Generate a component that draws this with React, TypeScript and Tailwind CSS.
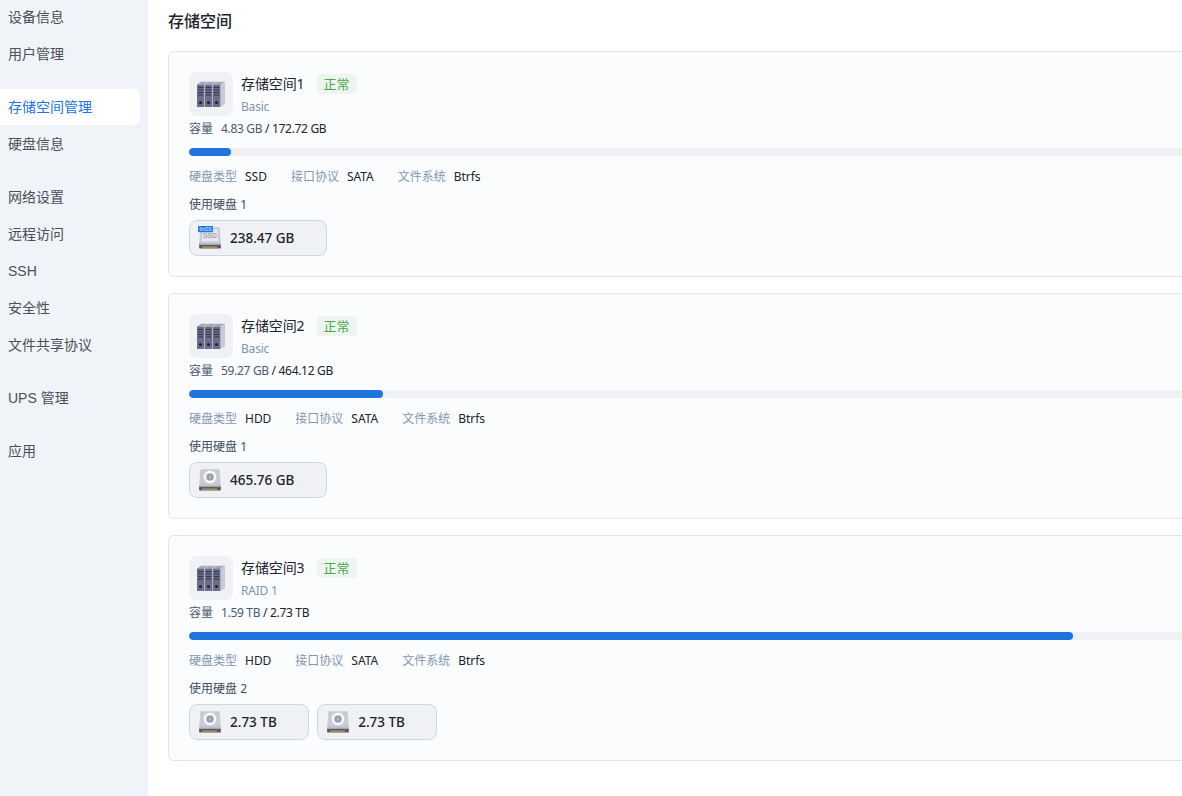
import React from "react";

const NAV_GROUPS = [
  ["设备信息", "用户管理"],
  ["存储空间管理", "硬盘信息"],
  ["网络设置", "远程访问", "SSH", "安全性", "文件共享协议"],
  ["UPS 管理"],
  ["应用"],
];

const ACTIVE = "存储空间管理";

type Volume = {
  name: string;
  mode: string;
  used: string;
  total: string;
  percent: number;
  diskType: string;
  disks: string[];
};

const VOLUMES: Volume[] = [
  {
    name: "存储空间1",
    mode: "Basic",
    used: "4.83 GB",
    total: "172.72 GB",
    percent: 2.77,
    diskType: "SSD",
    disks: ["238.47 GB"],
  },
  {
    name: "存储空间2",
    mode: "Basic",
    used: "59.27 GB",
    total: "464.12 GB",
    percent: 12.77,
    diskType: "HDD",
    disks: ["465.76 GB"],
  },
  {
    name: "存储空间3",
    mode: "RAID 1",
    used: "1.59 TB",
    total: "2.73 TB",
    percent: 58.2,
    diskType: "HDD",
    disks: ["2.73 TB", "2.73 TB"],
  },
];

function ServerIcon() {
  return (
    <svg width="28" height="28" viewBox="0 0 28 28">
      <path d="M23 4.5 28 2v22.5l-5 2.5z" fill="#c9cad6" />
      {[0, 8, 16].map((x) => (
        <g key={x} transform={`translate(${x} 0)`}>
          <path d="M0 4.5 4 1.8h8L7.2 4.5z" fill="#a6a7b9" />
          <path d="M7 4.5 8 4v22.5l-1 .5z" fill="#b9bac8" />
          <rect y="4.5" width="7.1" height="22.5" rx=".3" fill="#6a6e88" />
          <path d="M1 7.5h5.2M1 10h5.2M1 12.5h5.2M1 15h5.2" stroke="#30344c" strokeWidth="1.1" />
          <circle cx="3.5" cy="22.5" r="1.6" fill="#202338" />
        </g>
      ))}
    </svg>
  );
}

function DriveIcon({ ssd }: { ssd: boolean }) {
  return (
    <svg width="24" height="24" viewBox="0 0 24 24">
      <path d="M3.4 1.3h17.2q1 0 1.1 1L22.9 18.5H1.1L2.3 2.3q.1-1 1.1-1z" fill="#c9cbd5" />
      <path d="M1.1 18.5h21.8v3.2q0 .8-.8.8H1.9q-.8 0-.8-.8z" fill="#595b6b" />
      <path d="M1.1 17.6h21.8v1.4H1.1z" fill="#a5a7b4" />
      <path d="M4.5 21.2h15" stroke="#c9a53a" strokeWidth="1.6" strokeDasharray="2.2 .8" />
      {ssd ? (
        <>
          <path d="M4.6 3h14.8l.9 12.6H3.7z" fill="#e6e7ed" />
          <text x="12" y="12.4" textAnchor="middle" fontSize="6.8" fontWeight="600" fill="#a4a7b6" className="font-['Liberation_Sans',sans-serif]">
            SSD
          </text>
          <rect x="0" y="0" width="15" height="6.3" rx=".8" fill="#2376e5" />
          <text x="7.5" y="5.1" textAnchor="middle" fontSize="5.3" fontWeight="700" fill="#b9d5ff" className="font-['Liberation_Sans',sans-serif]">
            fnOS
          </text>
        </>
      ) : (
        <>
          <circle cx="12" cy="9" r="5.2" fill="#c5c7d0" stroke="#fafafc" strokeWidth="2.2" />
          <circle cx="12" cy="9" r="3.3" fill="#9a9ca9" />
          <circle cx="12" cy="9" r="1.2" fill="#b9bbc6" />
          <path d="M4 3h.8M19.2 3h.8M3.2 15.8h.8M20 15.8h.8" stroke="#a5a7b4" />
        </>
      )}
    </svg>
  );
}

function Meta({ label, value }: { label: string; value: string }) {
  return (
    <div className="flex gap-2">
      <span className="text-[#8496b2]">{label}</span>
      <span className="tracking-[-0.03px] text-[#202329]">{value}</span>
    </div>
  );
}

function VolumeCard({ volume }: { volume: Volume }) {
  return (
    <section className="h-[226px] w-[1561px] shrink-0 rounded-md border border-[#dfe6ef] bg-[#fbfcfe] p-5">
      <div className="flex h-11 gap-2">
        <div className="flex size-11 items-center justify-center rounded-lg bg-[#f0f1f5]">
          <ServerIcon />
        </div>
        <div className="flex flex-col">
          <div className="flex h-6 shrink-0 items-center gap-3">
            <h2 className="text-sm tracking-[-0.1px] text-[#202329]">{volume.name}</h2>
            <span className="flex h-5 w-10 items-center justify-center rounded bg-[#edf6ee] pt-px text-[13px] text-[#4ba650]">
              正常
            </span>
          </div>
          <p className="text-xs leading-[21px] tracking-[-0.2px] text-[#8094b3]">{volume.mode}</p>
        </div>
      </div>
      <div className="flex h-8 text-xs leading-[25px] tracking-[-0.32px] text-[#4c5a70]">
        <span className="mr-2 tracking-normal">容量</span>
        <span className="whitespace-pre">{volume.used} </span>
        <span className="text-[#202329]">/ {volume.total}</span>
      </div>
      <div className="h-2 overflow-hidden rounded bg-[#f0f1f4]">
        <div className="h-full rounded bg-[#2173df]" style={{ width: `${volume.percent}%` }} />
      </div>
      <div className="flex h-10 items-center gap-6 pt-0.5 text-xs">
        <Meta label="硬盘类型" value={volume.diskType} />
        <Meta label="接口协议" value="SATA" />
        <Meta label="文件系统" value="Btrfs" />
      </div>
      <div className="h-6 text-xs leading-[18px] text-[#414d60]">使用硬盘 {volume.disks.length}</div>
      <div className="flex gap-2">
        {volume.disks.map((size, i) => (
          <div
            key={i}
            className="flex h-9 items-center gap-2 rounded-lg border border-[#ccd7e4] bg-[#f0f1f5] pl-2 pr-[31.4px] text-[13.5px] font-medium text-[#202329]"
          >
            <DriveIcon ssd={volume.diskType === "SSD"} />
            {size}
          </div>
        ))}
      </div>
    </section>
  );
}

export default function App() {
  return (
    <div className="flex h-screen overflow-hidden bg-white font-['Noto_Sans','Noto_Sans_CJK_SC',sans-serif]">
      <nav className="-mt-px flex w-[148px] shrink-0 flex-col gap-[17px] bg-[#f0f4f9] font-['Liberation_Sans','Noto_Sans_CJK_SC',sans-serif]">
        {NAV_GROUPS.map((group) => (
          <div key={group[0]} className="flex flex-col gap-px">
            {group.map((item) => (
              <a
                key={item}
                className={`flex h-9 w-[140px] items-center rounded-r-md pl-2 text-sm ${
                  item === ACTIVE ? "bg-white text-[#2173df]" : "text-[#4b4f56]"
                }`}
              >
                {item}
              </a>
            ))}
          </div>
        ))}
      </nav>
      <main className="min-w-0 flex-1 overflow-hidden pl-5">
        <h1 className="h-[51px] pt-[9px] text-base leading-6 font-medium text-[#202329]">存储空间</h1>
        <div className="flex flex-col gap-4">
          {VOLUMES.map((volume) => (
            <VolumeCard key={volume.name} volume={volume} />
          ))}
        </div>
      </main>
    </div>
  );
}
